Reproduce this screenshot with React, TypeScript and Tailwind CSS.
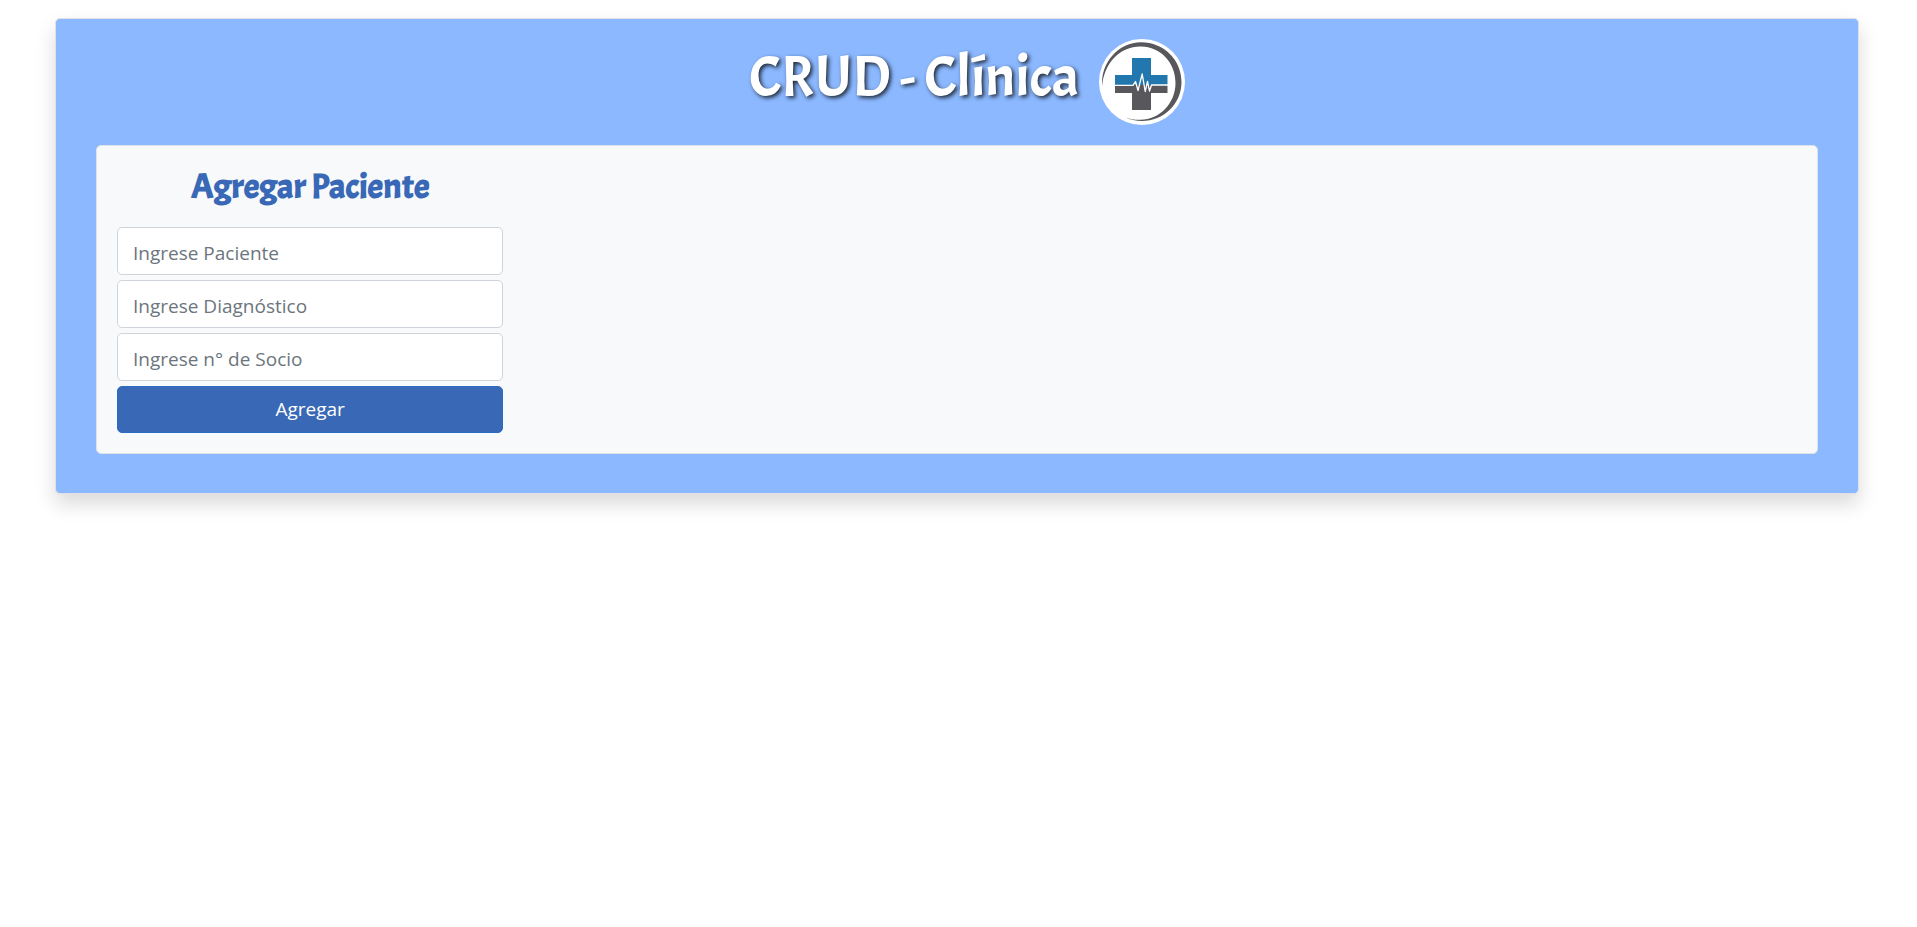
import React from "react";

function ClinicLogo() {
  return (
    <svg viewBox="0 0 86 86" className="size-[86px] shrink-0" role="img" aria-label="Clínica">
      <circle cx="43" cy="43" r="43" fill="#fff" />
      <path
        d="M3.200 47C1.500 23 20 3.200 42 3.200C65 3.200 82.500 21 82.500 43C82.500 65 64.500 82 43 82C37 82 31 80.500 26.500 78.500C31 80 36 81 41.500 80.800C61 80.500 76.500 64 76.500 44C76.500 23.500 61.500 7.800 42 7.500C21 7.200 5 24 3.200 47Z"
        fill="#58585c"
      />
      <path d="M33 19H52V36H68.500V46H16V36H33Z" fill="#2278ae" />
      <path d="M16 46H68.500V54H52V71H33V54H16Z" fill="#58585c" />
      <path
        d="M15.500 46.300H34L36.500 42.500L39 51.500L43.200 35L46.200 52.500L48.500 42.500L50.500 52L52.500 46H69"
        fill="none"
        stroke="#fff"
        strokeWidth="1.300"
        strokeLinejoin="round"
      />
    </svg>
  );
}

const fields = [
  { name: "paciente", label: "Ingrese Paciente" },
  { name: "diagnostico", label: "Ingrese Diagnóstico" },
  { name: "socio", label: "Ingrese n° de Socio" },
];

export default function App() {
  return (
    <div className="min-h-screen bg-white pt-[18px] pr-[58px] pb-10 pl-[55px] font-['Segoe_UI','Open_Sans',sans-serif]">
      <main className="rounded-[5px] border border-[#dee2e6] bg-[#8bb8ff] px-10 pb-[39px] shadow-[0_10px_20px_rgba(0,0,0,0.15)]">
        <header className="flex items-start justify-center gap-5 py-5 pl-5">
          <h1 className="font-['Acme',sans-serif] text-[58px] leading-[76px] font-normal text-white [text-shadow:2px_2px_4px_rgba(0,0,0,0.8)]">
            CRUD - Clínica
          </h1>
          <ClinicLogo />
        </header>
        <section className="rounded-[5px] border border-[#dee2e6] bg-[#f8f9fa] p-5">
          <form className="w-[23%] min-w-[300px]" onSubmit={(e) => e.preventDefault()}>
            <h2 className="mb-5 text-center font-['Acme',sans-serif] text-[35px] leading-[41px] font-bold text-[#3969b6]">
              Agregar Paciente
            </h2>
            <div className="flex flex-col gap-[5px]">
              {fields.map((f) => (
                <input
                  key={f.name}
                  type="text"
                  name={f.name}
                  aria-label={f.label}
                  placeholder={f.label}
                  className="h-12 w-full rounded-[5px] border border-[#ced4da] bg-white px-[15px] pt-1 text-[19px] text-[#212529] placeholder:text-[#6c757d]"
                />
              ))}
              <button
                type="submit"
                className="h-[47px] w-full rounded-[5px] border border-[#2a6cc4] bg-[#3969b6] text-[19px] text-white"
              >
                Agregar
              </button>
            </div>
          </form>
        </section>
      </main>
    </div>
  );
}
